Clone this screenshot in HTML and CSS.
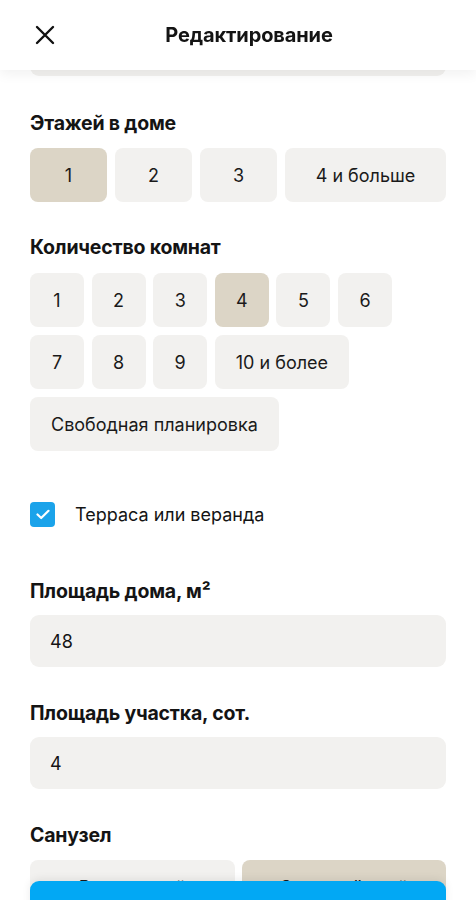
FILE: index.html
```html
<!DOCTYPE html>
<html lang="ru">
<head>
<meta charset="utf-8">
<title>Редактирование</title>
<link rel="stylesheet" href="styles.css">
</head>
<body>
<header class="topbar">
  <button class="close" aria-label="Закрыть">
    <svg width="22" height="22" viewBox="0 0 22 22"><path d="M3 3L19 19M19 3L3 19" stroke="#111" stroke-width="2.4" stroke-linecap="round"/></svg>
  </button>
  <h1 class="title">Редактирование</h1>
</header>

<main class="content">
  <div class="field prev"></div>

  <section class="group floors-group">
    <h2 class="label">Этажей в доме</h2>
    <div class="row floors">
      <span class="chip w77 active">1</span>
      <span class="chip w77">2</span>
      <span class="chip w77">3</span>
      <span class="chip grow">4 и больше</span>
    </div>
  </section>

  <section class="group rooms-group">
    <h2 class="label">Количество комнат</h2>
    <div class="rooms">
      <div class="row tight">
        <span class="chip sq">1</span>
        <span class="chip sq">2</span>
        <span class="chip sq">3</span>
        <span class="chip sq active">4</span>
        <span class="chip sq">5</span>
        <span class="chip sq">6</span>
      </div>
      <div class="row tight">
        <span class="chip sq">7</span>
        <span class="chip sq">8</span>
        <span class="chip sq">9</span>
        <span class="chip pad">10 и более</span>
      </div>
      <div class="row tight">
        <span class="chip pad">Свободная планировка</span>
      </div>
    </div>
  </section>

  <label class="check">
    <span class="box">
      <svg width="14" height="11" viewBox="0 0 14 11"><path d="M1.5 5.5L5.2 9L12.5 1.8" fill="none" stroke="#fff" stroke-width="2.2" stroke-linecap="round" stroke-linejoin="round"/></svg>
    </span>
    <span class="check-text">Терраса или веранда</span>
  </label>

  <section class="group area-group">
    <h2 class="label">Площадь дома, м²</h2>
    <div class="field">48</div>
  </section>

  <section class="group lot-group">
    <h2 class="label">Площадь участка, сот.</h2>
    <div class="field">4</div>
  </section>

  <section class="group bath-group">
    <h2 class="label">Санузел</h2>
    <div class="row halves">
      <span class="chip half">Раздельный</span>
      <span class="chip half active">Совмещённый</span>
    </div>
  </section>
</main>

<div class="savebar">
  <button class="save">Сохранить</button>
</div>
</body>
</html>
```

FILE: styles.css
```css
* { box-sizing: border-box; }
html, body { margin: 0; padding: 0; }
body {
  width: 476px;
  height: 900px;
  overflow: hidden;
  background: #fff;
  font-family: Inter, "Noto Sans", sans-serif;
  color: #141414;
  position: relative;
}
.topbar {
  position: fixed;
  top: 0; left: 0; right: 0;
  height: 70px;
  background: #fff;
  display: flex;
  align-items: center;
  justify-content: center;
  box-shadow: 0 4px 12px rgba(0,0,0,0.06);
  z-index: 5;
}
.close {
  position: absolute;
  left: 34px;
  top: 24px;
  border: 0;
  background: none;
  padding: 0;
  width: 22px;
  height: 22px;
}
.title {
  margin: 0;
  font-size: 20px;
  font-weight: 700;
  letter-spacing: -0.1px;
  padding-left: 22px;
}
.content {
  padding: 24px 30px 0 30px;
  display: flex;
  flex-direction: column;
}
.field {
  height: 52px;
  background: #f2f1ef;
  border-radius: 9px;
  display: flex;
  align-items: center;
  padding-left: 20px;
  font-size: 18px;
}
.group { display: flex; flex-direction: column; }
.floors-group { margin-top: 35px; }
.rooms-group { margin-top: 33px; }
.check { margin-top: 51px; }
.area-group { margin-top: 52px; }
.lot-group { margin-top: 34px; }
.bath-group { margin-top: 34px; }
.label {
  margin: 0 0 13px 0;
  font-size: 19.5px;
  font-weight: 700;
  line-height: 24px;
  letter-spacing: -0.2px;
}
.area-group .label, .lot-group .label { margin-bottom: 12px; }
.row {
  display: flex;
  gap: 8px;
}
.rooms {
  display: flex;
  flex-direction: column;
  gap: 8px;
  margin-top: 1px;
}
.row.tight { gap: 7.6px; }
.chip {
  height: 54px;
  border-radius: 8px;
  background: #f2f1ef;
  display: flex;
  align-items: center;
  justify-content: center;
  font-size: 18px;
  color: #1a1a1a;
}
.chip.active { background: #dcd5c6; }
.w77 { width: 77px; }
.grow { flex: 1; }
.sq { width: 54px; }
.pad { padding: 0 21px; }
.halves { gap: 7px; }
.half { flex: 1; }
.check {
  display: flex;
  align-items: center;
  gap: 20px;
}
.box {
  width: 25px;
  height: 25px;
  border-radius: 4px;
  background: #1ba3ea;
  display: flex;
  align-items: center;
  justify-content: center;
}
.check-text { font-size: 18px; }
.savebar {
  position: fixed;
  left: 30px;
  right: 30px;
  top: 881px;
  z-index: 6;
}
.save {
  width: 100%;
  height: 56px;
  border: 0;
  border-radius: 9px;
  background: #02a8f4;
  color: #fff;
  font-family: inherit;
  font-size: 18px;
  font-weight: 600;
  box-shadow: 0 -2px 8px rgba(0,0,0,0.08);
}
```
